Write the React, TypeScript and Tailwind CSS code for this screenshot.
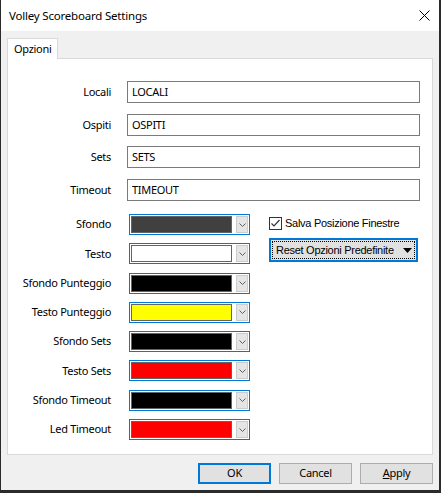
import React from 'react';

const textFields = [
  { label: 'Locali', value: 'LOCALI', gap: 'mt-0' },
  { label: 'Ospiti', value: 'OSPITI', gap: 'mt-[11px]' },
  { label: 'Sets', value: 'SETS', gap: 'mt-[10px]' },
  { label: 'Timeout', value: 'TIMEOUT', gap: 'mt-[11px]' },
];

const colorFields = [
  { label: 'Sfondo', swatch: 'bg-[#404040]' },
  { label: 'Testo', swatch: 'bg-white' },
  { label: 'Sfondo Punteggio', swatch: 'bg-black' },
  { label: 'Testo Punteggio', swatch: 'bg-[#ffff00]' },
  { label: 'Sfondo Sets', swatch: 'bg-black' },
  { label: 'Testo Sets', swatch: 'bg-[#ff0000]' },
  { label: 'Sfondo Timeout', swatch: 'bg-black' },
  { label: 'Led Timeout', swatch: 'bg-[#ff0000]' },
];

function ColorCombo({ swatch }: { swatch: string }) {
  return (
    <div className="w-[121px] h-[21px] border border-[#0078d7] bg-white p-[1px] flex gap-[4px]">
      <div className={`w-[101px] h-full border border-[#646464] ${swatch}`} />
      <div className="w-[12px] h-full bg-[#e5e5e5] border border-[#cccccc] flex items-center justify-center">
        <svg width="7" height="4" viewBox="0 0 7 4">
          <polyline points="0.5,0.5 3.5,3.5 6.5,0.5" fill="none" stroke="#606060" strokeWidth="1" />
        </svg>
      </div>
    </div>
  );
}

export default function App() {
  return (
    <div className="w-[441px] h-[493px] bg-[#2b2b2b] font-['Noto_Sans',sans-serif] text-[11px] tracking-[-0.3px] text-black">
      <div className="w-[438px] h-[490px] ml-[1px] bg-[#f0f0f0] flex flex-col">
        {/* Title bar */}
        <div className="h-[31px] bg-white flex items-center justify-between pl-[8px] pr-[9px]">
          <span className="text-[11.5px] tracking-[-0.2px]">Volley Scoreboard Settings</span>
          <svg width="11" height="11" viewBox="0 0 11 11">
            <line x1="0.5" y1="0.5" x2="10.5" y2="10.5" stroke="#000" strokeWidth="1" />
            <line x1="10.5" y1="0.5" x2="0.5" y2="10.5" stroke="#000" strokeWidth="1" />
          </svg>
        </div>

        <div className="px-[6px] pt-[7px]">
          {/* Tab */}
          <div className="flex">
            <div className="relative z-10 w-[51px] h-[21px] -mb-[1px] bg-white border border-b-0 border-[#d9d9d9] pl-[6px] pt-[2px]">
              Opzioni
            </div>
          </div>

          {/* Tab panel */}
          <div className="w-[426px] h-[397px] bg-white border border-[#d9d9d9] pt-[22px]">
            <div className="flex flex-col">
              {textFields.map((f) => (
                <div key={f.label} className={`flex items-center gap-[16px] ${f.gap}`}>
                  <div className="w-[103px] text-right">{f.label}</div>
                  <div className="w-[293px] h-[22px] border border-[#7a7a7a] pl-[4px] pt-[2px] leading-[16px]">
                    {f.value}
                  </div>
                </div>
              ))}
            </div>

            <div className="flex mt-[13px]">
              <div className="flex flex-col gap-[8.3px]">
                {colorFields.map((f) => (
                  <div key={f.label} className="flex items-center gap-[18px] h-[21px]">
                    <div className="w-[103px] text-right whitespace-nowrap">{f.label}</div>
                    <ColorCombo swatch={f.swatch} />
                  </div>
                ))}
              </div>

              <div className="ml-[19px] flex flex-col pt-[3px] font-['Liberation_Sans',Arial,sans-serif] tracking-[-0.28px]">
                <label className="flex items-center gap-[3px] h-[13px]">
                  <div className="w-[13px] h-[13px] border border-[#333333] bg-white flex items-center justify-center">
                    <svg width="11" height="11" viewBox="0 0 11 11">
                      <polyline points="1.5,5.5 4,8 9.5,2" fill="none" stroke="#333" strokeWidth="1.2" />
                    </svg>
                  </div>
                  <span>Salva Posizione Finestre</span>
                </label>
                <button className="mt-[8px] w-[149px] h-[24px] border-2 border-[#0078d7] bg-[#e1e1e1] p-[1px]">
                  <div className="w-full h-full border border-dotted border-black flex items-center justify-between pl-[3px] pr-[2px]">
                    <span>Reset Opzioni Predefinite</span>
                    <svg width="9" height="5" viewBox="0 0 9 5">
                      <polygon points="0,0 9,0 4.5,5" fill="#000" />
                    </svg>
                  </div>
                </button>
              </div>
            </div>
          </div>

          {/* Dialog buttons */}
          <div className="flex justify-end gap-[8px] mt-[8px]">
            <button className="w-[73px] h-[21px] border-2 border-[#0078d7] bg-[#e1e1e1]">OK</button>
            <button className="w-[73px] h-[21px] border border-[#adadad] bg-[#e1e1e1]">Cancel</button>
            <button className="w-[73px] h-[21px] border border-[#adadad] bg-[#e1e1e1]">
              <span className="underline">A</span>pply
            </button>
          </div>
        </div>
      </div>
    </div>
  );
}
